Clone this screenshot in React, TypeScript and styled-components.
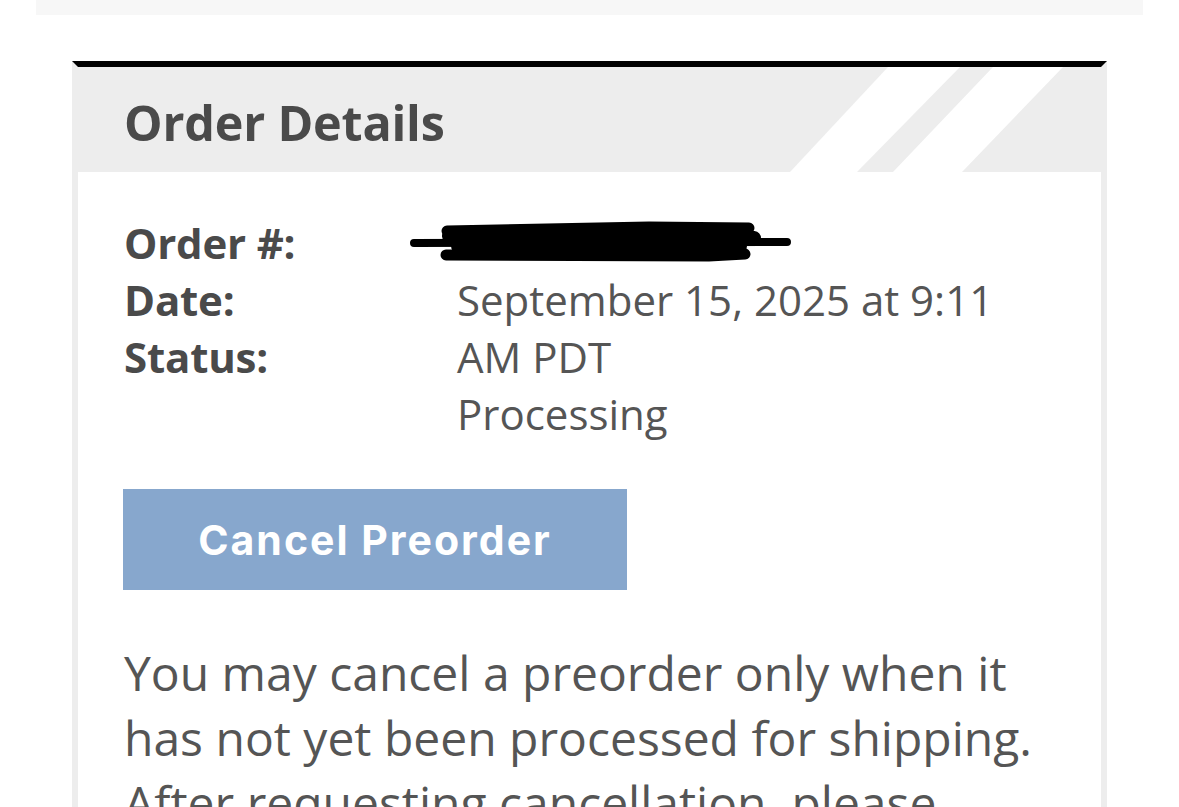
import React from "react";
import styled, { createGlobalStyle } from "styled-components";

const GlobalStyle = createGlobalStyle`
  html, body {
    margin: 0;
    padding: 0;
    background: #ffffff;
  }
  body {
    font-family: "Open Sans", "Noto Sans", sans-serif;
    overflow: hidden;
  }
`;

const Page = styled.div`
  width: 1179px;
  height: 807px;
  overflow: hidden;
`;

const TopBar = styled.div`
  height: 15px;
  margin: 0 36px;
  background: #f7f7f7;
`;

const Card = styled.section`
  margin: 46px 72px 0 72px;
  border: 6px solid #ededed;
  border-top: 6px solid #000000;
  border-bottom: none;
`;

const Header = styled.header`
  position: relative;
  height: 105px;
  background: #ededed;
  display: flex;
  align-items: center;
  padding-left: 46px;
  overflow: hidden;
`;

const Stripes = styled.svg`
  position: absolute;
  top: 0;
  left: 0;
  width: 100%;
  height: 100%;
  pointer-events: none;
`;

const Title = styled.h1`
  position: relative;
  margin: 5px 0 0 0;
  font-family: "Open Sans", sans-serif;
  font-weight: 700;
  font-size: 48.5px;
  color: #4a4a4a;
  letter-spacing: -0.2px;
`;

const Body = styled.div`
  background: #ffffff;
  padding: 42px 46px 0 46px;
`;

const Details = styled.div`
  display: flex;
`;

const LabelColumn = styled.div`
  width: 333px;
  flex: none;
  display: flex;
  flex-direction: column;
`;

const ValueColumn = styled.div`
  width: 570px;
  display: flex;
  flex-direction: column;
`;

const Label = styled.div`
  font-weight: 700;
  font-size: 42px;
  line-height: 57px;
  color: #4a4a4a;
  letter-spacing: -0.2px;
`;

const Value = styled.div`
  position: relative;
  font-weight: 400;
  font-size: 42px;
  line-height: 57px;
  color: #555555;
  min-height: 57px;
`;

const Redaction = styled.svg`
  position: absolute;
  left: -48px;
  top: 0;
  width: 384px;
  height: 52px;
`;

const CancelButton = styled.button`
  display: flex;
  align-items: center;
  justify-content: center;
  width: 504px;
  height: 101px;
  margin: 47px 0 0 -1px;
  padding: 0;
  border: none;
  background: #87a7cd;
  color: #ffffff;
  font-family: "Inter", "Lato", sans-serif;
  font-weight: 700;
  font-size: 41px;
  letter-spacing: 2px;
  cursor: pointer;
`;

const Notice = styled.p`
  margin: 50px 0 0 0;
  font-size: 48px;
  line-height: 65px;
  color: #555555;
  font-weight: 400;
`;

export default function App() {
  return (
    <Page>
      <GlobalStyle />
      <TopBar />
      <Card>
        <Header>
          <Stripes viewBox="0 0 1023 105" preserveAspectRatio="none">
            <polygon points="810,0 882,0 779,105 712,105" fill="#ffffff" />
            <polygon points="915,0 985,0 884,105 815,105" fill="#ffffff" />
          </Stripes>
          <Title>Order Details</Title>
        </Header>
        <Body>
          <Details>
            <LabelColumn>
              <Label>Order #:</Label>
              <Label>Date:</Label>
              <Label>Status:</Label>
            </LabelColumn>
            <ValueColumn>
              <Value>
                <Redaction viewBox="0 0 384 52">
                  <g stroke="#000" strokeLinecap="round" fill="none">
                    <path d="M38 17 L240 13 L340 14" strokeWidth="11" />
                    <path d="M5 29 L378 28" strokeWidth="8" />
                    <path d="M37 41 L300 42 L336 40" strokeWidth="11" />
                    <path d="M40 22 Q190 12 345 24" strokeWidth="14" />
                    <path d="M50 32 L330 32" strokeWidth="16" />
                  </g>
                </Redaction>
              </Value>
              <Value>September 15, 2025 at 9:11 AM PDT</Value>
              <Value>Processing</Value>
            </ValueColumn>
          </Details>
          <CancelButton type="button">Cancel Preorder</CancelButton>
          <Notice>
            You may cancel a preorder only when it has not yet been processed for shipping.
            After requesting cancellation, please check your email for confirmation.
          </Notice>
        </Body>
      </Card>
    </Page>
  );
}
